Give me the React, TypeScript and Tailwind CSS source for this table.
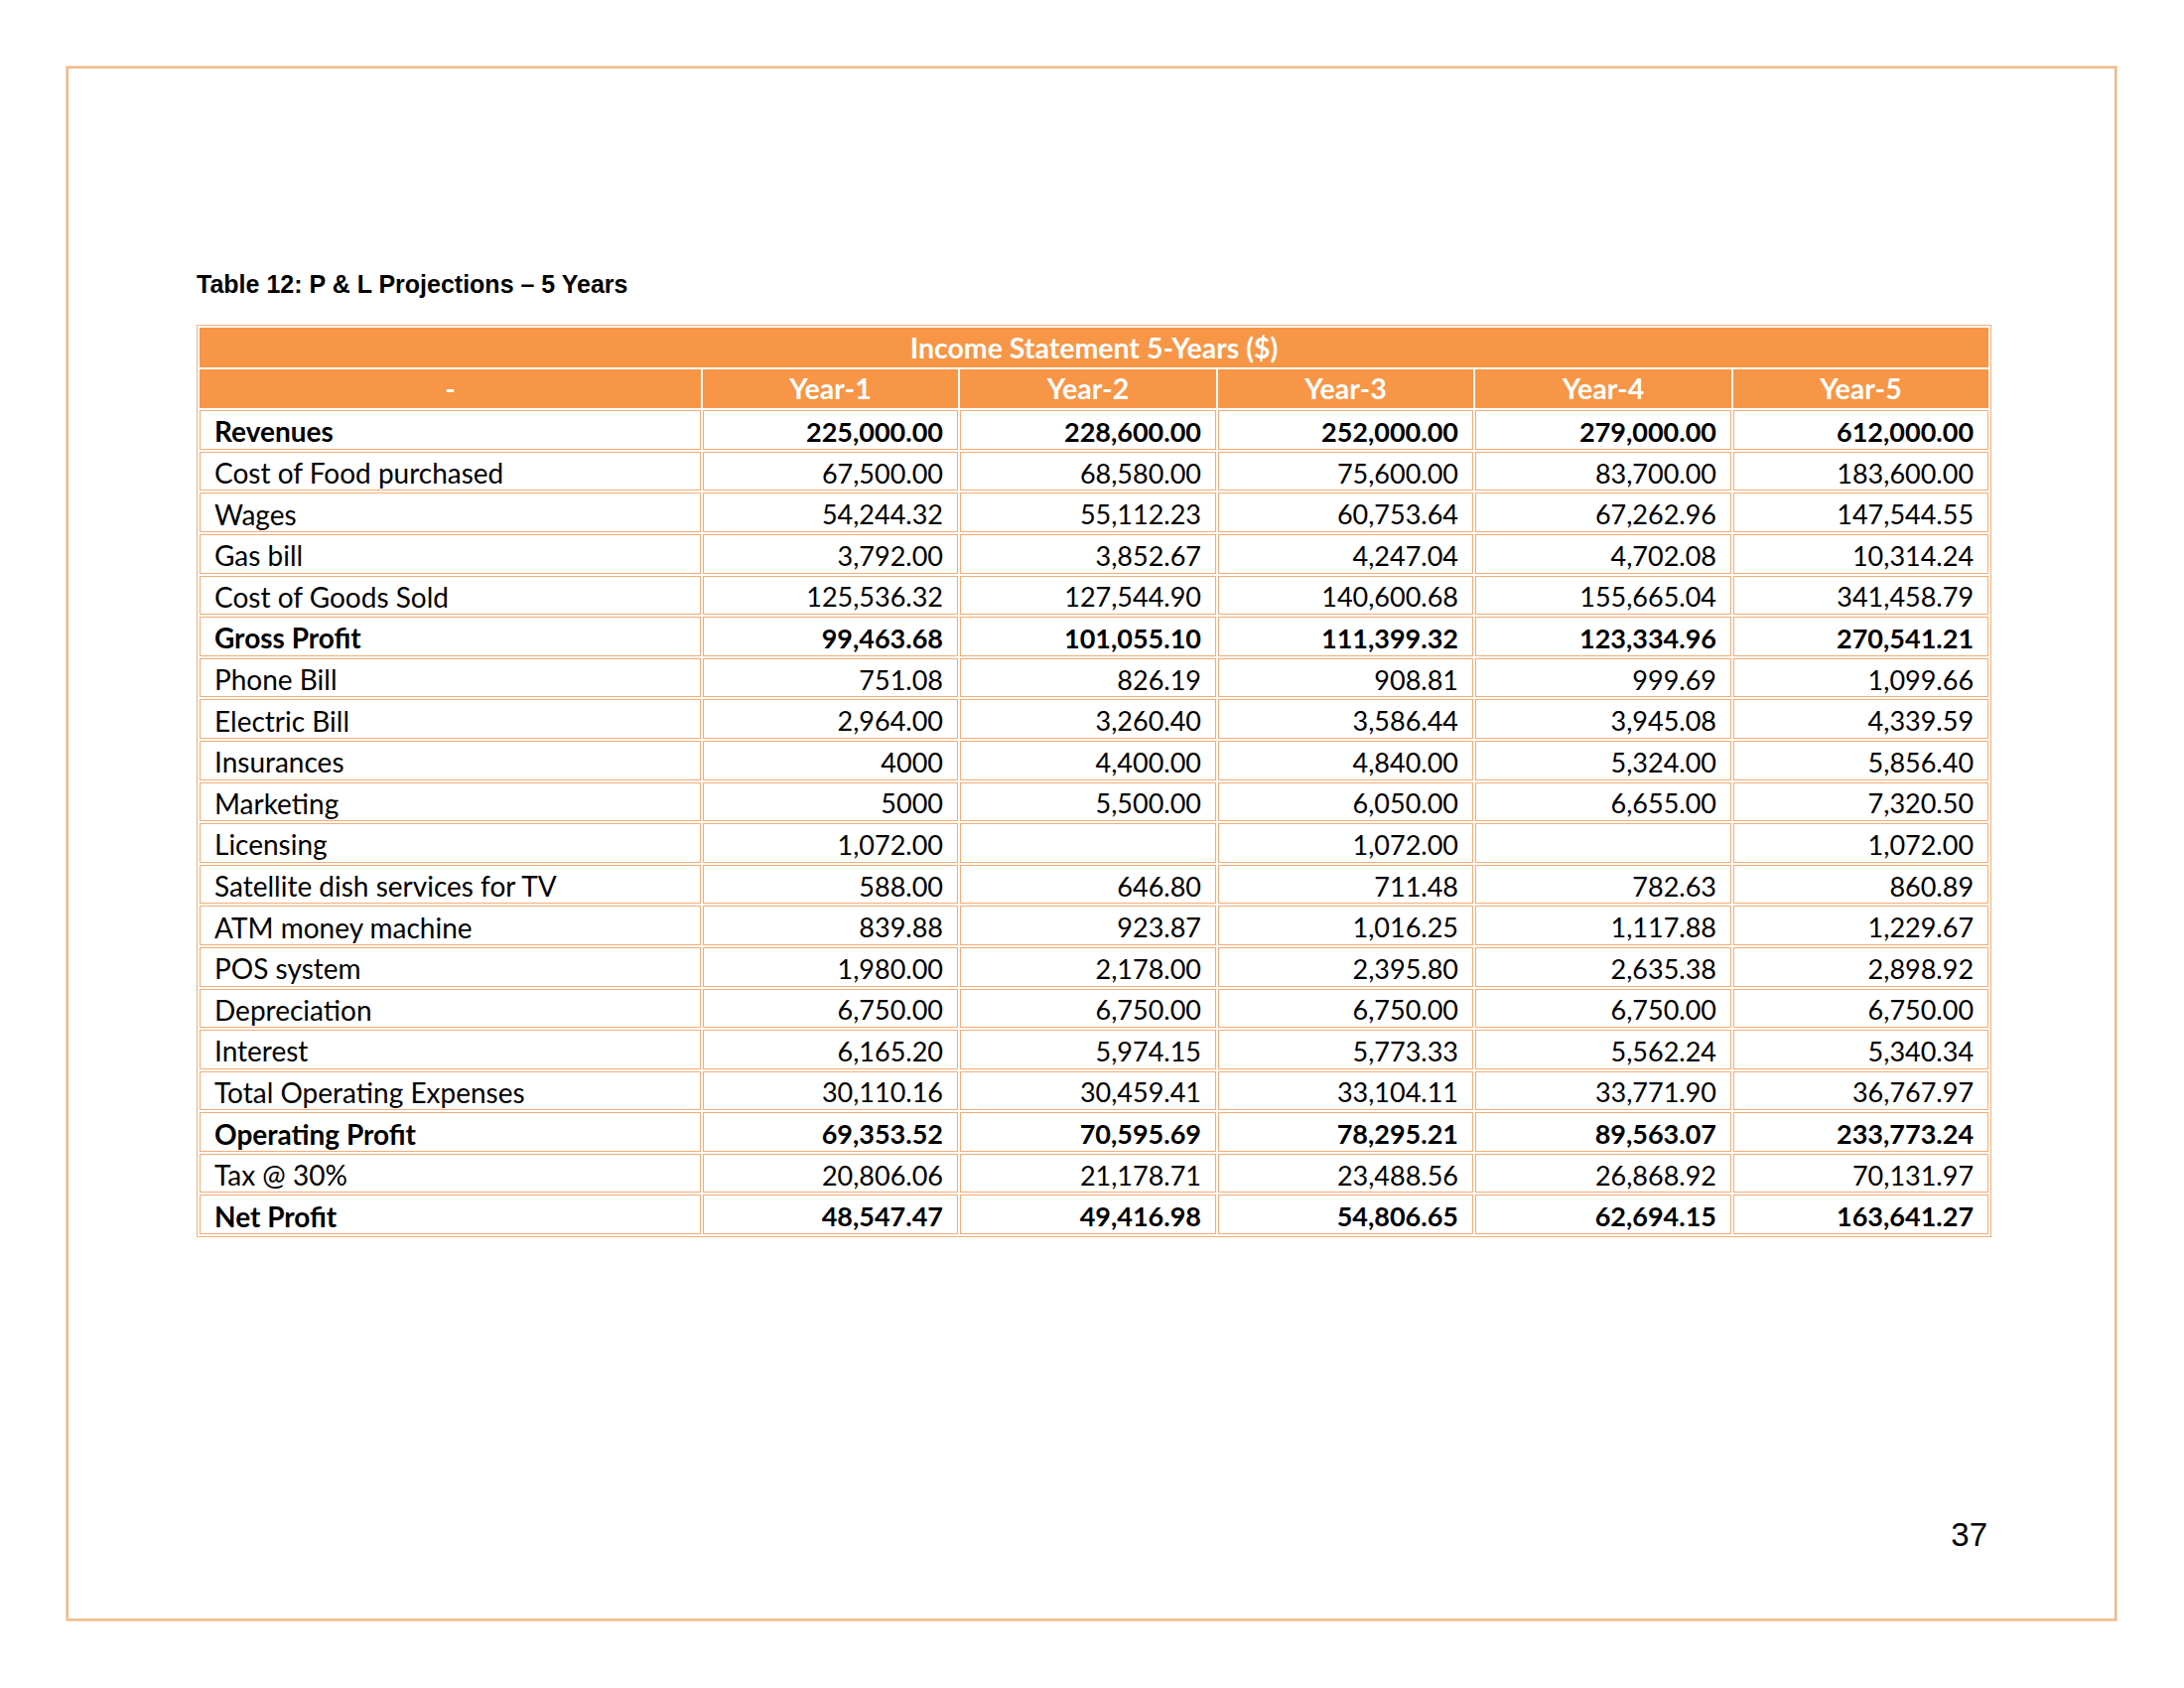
import React from "react";

type Row = { label: string; values: string[]; bold?: boolean };

const rows: Row[] = [
  { label: "Revenues", bold: true, values: ["225,000.00", "228,600.00", "252,000.00", "279,000.00", "612,000.00"] },
  { label: "Cost of Food purchased", values: ["67,500.00", "68,580.00", "75,600.00", "83,700.00", "183,600.00"] },
  { label: "Wages", values: ["54,244.32", "55,112.23", "60,753.64", "67,262.96", "147,544.55"] },
  { label: "Gas bill", values: ["3,792.00", "3,852.67", "4,247.04", "4,702.08", "10,314.24"] },
  { label: "Cost of Goods Sold", values: ["125,536.32", "127,544.90", "140,600.68", "155,665.04", "341,458.79"] },
  { label: "Gross Profit", bold: true, values: ["99,463.68", "101,055.10", "111,399.32", "123,334.96", "270,541.21"] },
  { label: "Phone Bill", values: ["751.08", "826.19", "908.81", "999.69", "1,099.66"] },
  { label: "Electric Bill", values: ["2,964.00", "3,260.40", "3,586.44", "3,945.08", "4,339.59"] },
  { label: "Insurances", values: ["4000", "4,400.00", "4,840.00", "5,324.00", "5,856.40"] },
  { label: "Marketing", values: ["5000", "5,500.00", "6,050.00", "6,655.00", "7,320.50"] },
  { label: "Licensing", values: ["1,072.00", "", "1,072.00", "", "1,072.00"] },
  { label: "Satellite dish services for TV", values: ["588.00", "646.80", "711.48", "782.63", "860.89"] },
  { label: "ATM money machine", values: ["839.88", "923.87", "1,016.25", "1,117.88", "1,229.67"] },
  { label: "POS system", values: ["1,980.00", "2,178.00", "2,395.80", "2,635.38", "2,898.92"] },
  { label: "Depreciation", values: ["6,750.00", "6,750.00", "6,750.00", "6,750.00", "6,750.00"] },
  { label: "Interest", values: ["6,165.20", "5,974.15", "5,773.33", "5,562.24", "5,340.34"] },
  { label: "Total Operating Expenses", values: ["30,110.16", "30,459.41", "33,104.11", "33,771.90", "36,767.97"] },
  { label: "Operating Profit", bold: true, values: ["69,353.52", "70,595.69", "78,295.21", "89,563.07", "233,773.24"] },
  { label: "Tax @ 30%", values: ["20,806.06", "21,178.71", "23,488.56", "26,868.92", "70,131.97"] },
  { label: "Net Profit", bold: true, values: ["48,547.47", "49,416.98", "54,806.65", "62,694.15", "163,641.27"] },
];

const years = ["Year-1", "Year-2", "Year-3", "Year-4", "Year-5"];

export default function App() {
  return (
    <div className="w-[2200px] h-[1700px] bg-white pt-[66px] pl-[66px]">
      <div className="w-[2067px] h-[1567px] border border-[#f7d6b6]">
        <div className="w-full h-full border-2 border-[#f0bb8a] flex flex-col pl-[129px] pt-[203px]">
          <h1 className="font-['Liberation_Sans',Arial,sans-serif] font-bold text-[25px] leading-[28px] text-black">
            Table 12: P &amp; L Projections – 5 Years
          </h1>

          <table className="mt-[27px] w-[1808px] table-fixed border-separate border-spacing-[2px] border border-[#f3b07c] font-['Lato',sans-serif] text-[27px] text-black">
            <colgroup>
              <col className="w-[505px]" />
              <col className="w-[257px]" />
              <col className="w-[258px]" />
              <col className="w-[257px]" />
              <col className="w-[258px]" />
              <col className="w-[257px]" />
            </colgroup>
            <thead>
              <tr className="h-[39.6px]">
                <th colSpan={6} className="bg-[#f79646] border border-[#f79646] text-white font-bold text-center text-[28.5px] p-0 leading-none">
                  Income Statement 5-Years ($)
                </th>
              </tr>
              <tr className="h-[39.6px]">
                <th className="bg-[#f79646] border border-[#f79646] text-white font-bold text-center text-[28.5px] p-0 leading-none">-</th>
                {years.map((y) => (
                  <th key={y} className="bg-[#f79646] border border-[#f79646] text-white font-bold text-center text-[28.5px] p-0 leading-none">
                    {y}
                  </th>
                ))}
              </tr>
            </thead>
            <tbody>
              {rows.map((row) => (
                <tr key={row.label} className={"h-[39.6px] " + (row.bold ? "font-bold" : "font-normal")}>
                  <td className="border border-[#f3ac76] text-left text-[28px] pl-[14px] pt-[3px] pb-0 leading-none whitespace-nowrap">
                    {row.label}
                  </td>
                  {row.values.map((v, i) => (
                    <td key={i} className="border border-[#f3ac76] text-right pr-[14px] pt-[3px] pb-0 leading-none">
                      {v}
                    </td>
                  ))}
                </tr>
              ))}
            </tbody>
          </table>

          <div className="flex-1" />
          <div className="flex justify-end pr-[128px] pb-[65px]">
            <span className="font-['Liberation_Sans',Arial,sans-serif] text-[33px] leading-[38px] text-black">37</span>
          </div>
        </div>
      </div>
    </div>
  );
}
